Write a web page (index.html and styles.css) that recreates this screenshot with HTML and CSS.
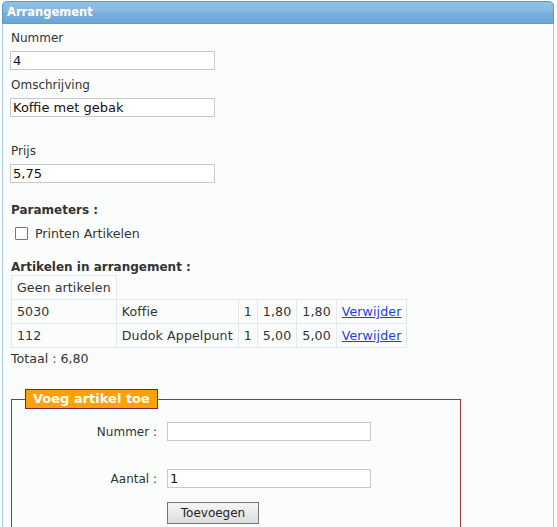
FILE: index.html
```html
<!DOCTYPE html>
<html>
<head>
<meta charset="utf-8">
<link rel="stylesheet" href="styles.css">
</head>
<body>
<div class="panel">
  <div class="panel-head">Arrangement</div>
  <div class="panel-body">
    <label class="lbl lbl-first">Nummer</label>
    <input class="txt" type="text" value="4">
    <label class="lbl">Omschrijving</label>
    <input class="txt" type="text" value="Koffie met gebak">
    <label class="lbl lbl-gap">Prijs</label>
    <input class="txt" type="text" value="5,75">

    <div class="section-title sec-params">Parameters :</div>
    <label class="check-row"><span class="checkbox"></span><span class="check-label">Printen Artikelen</span></label>

    <div class="section-title sec-art">Artikelen in arrangement :</div>
    <table class="art-table">
      <tr><td>Geen artikelen</td></tr>
      <tr><td>5030</td><td>Koffie</td><td>1</td><td>1,80</td><td>1,80</td><td><a href="#">Verwijder</a></td></tr>
      <tr><td>112</td><td>Dudok Appelpunt</td><td>1</td><td>5,00</td><td>5,00</td><td><a href="#">Verwijder</a></td></tr>
    </table>
    <div class="total">Totaal : 6,80</div>

    <fieldset class="add-box">
      <legend class="add-legend">Voeg artikel toe</legend>
      <div class="add-grid">
        <label class="add-lbl">Nummer :</label>
        <input class="txt txt-wide" type="text" value="">
        <div class="spacer"></div>
        <label class="add-lbl">Aantal :</label>
        <input class="txt txt-wide" type="text" value="1">
        <div></div>
        <button class="btn" type="button">Toevoegen</button>
      </div>
    </fieldset>
  </div>
</div>
</body>
</html>
```

FILE: styles.css
```css
html, body {
  margin: 0;
  padding: 0;
  background: #ffffff;
}
body {
  font-family: "DejaVu Sans", Verdana, sans-serif;
  font-size: 12px;
  color: #333333;
}
.panel {
  margin: 1px 3px 0 2px;
  border: 1px solid #a6c9e2;
  border-top: none;
  border-radius: 5px 5px 0 0;
  background: #fbfdfd;
  height: 540px;
  box-sizing: border-box;
}
.panel-head {
  height: 23px;
  box-sizing: border-box;
  border: 1px solid #5c9ccc;
  border-radius: 5px 5px 0 0;
  margin: 0 -1px;
  background: linear-gradient(to bottom, #93c1e4 0%, #86b7e0 45%, #78aedb 55%, #6ba6d6 100%);
  color: #ffffff;
  font-weight: bold;
  font-size: 11.5px;
  line-height: 20px;
  padding-left: 4px;
}
.panel-body {
  padding: 5px 0 0 7px;
  display: flex;
  flex-direction: column;
  align-items: flex-start;
}
.lbl {
  display: block;
  line-height: 16px;
  margin: 7px 0 5px 1px;
}
.lbl-first {
  margin-top: 1px;
}
.lbl-gap {
  margin-top: 26px;
}
.txt {
  width: 205px;
  height: 19px;
  box-sizing: border-box;
  border: 1px solid #c8c8c8;
  background: #ffffff;
  font-family: "DejaVu Sans", Verdana, sans-serif;
  font-size: 13px;
  color: #111111;
  padding: 0 2px;
  margin: 0;
  outline: none;
}
.section-title {
  font-weight: bold;
  line-height: 16px;
  margin-left: 1px;
}
.sec-params {
  margin-top: 19px;
}
.check-row {
  display: flex;
  align-items: center;
  margin: 7px 0 0 5px;
  height: 16px;
}
.checkbox {
  width: 11px;
  height: 11px;
  border: 1px solid #767676;
  border-radius: 1px;
  background: #ffffff;
}
.check-label {
  margin-left: 7px;
  font-size: 12.6px;
}
.sec-art {
  margin-top: 18px;
}
.art-table {
  border-collapse: collapse;
  margin-left: 1px;
  font-size: 12.6px;
  letter-spacing: 0.1px;
}
.art-table td {
  border: 1px solid #e3e6ef;
  height: 23px;
  padding: 0 5px;
  white-space: nowrap;
}
.art-table td.num {
  padding: 0 6px;
}
.art-table a {
  color: #1a3fe0;
}
.total {
  font-size: 12.6px;
  line-height: 18px;
  margin: 2px 0 0 1px;
}
.add-box {
  margin: 21px 0 0 1px;
  width: 450px;
  box-sizing: border-box;
  border: 1px solid #9a3333;
  padding: 0 0 20px 13px;
  min-width: 0;
}
.add-legend {
  background: #ffa200;
  border: 1px solid #7b1e60;
  color: #ffffff;
  font-weight: bold;
  font-size: 13px;
  line-height: 18px;
  padding: 0 7px;
}
.add-grid {
  display: grid;
  grid-template-columns: 132px 204px;
  column-gap: 10px;
  align-items: center;
  margin-top: 13px;
}
.add-lbl {
  text-align: right;
  line-height: 18px;
}
.txt-wide {
  width: 204px;
}
.spacer {
  grid-column: 1 / 3;
  height: 28px;
}
.btn {
  grid-column: 2;
  margin-top: 14px;
  width: 92px;
  height: 22px;
  border: 1px solid #777777;
  border-radius: 0;
  background: linear-gradient(to bottom, #f6f6f6, #dcdcdc);
  font-family: "DejaVu Sans", Verdana, sans-serif;
  font-size: 12px;
  color: #222222;
  padding: 0;
}
```
